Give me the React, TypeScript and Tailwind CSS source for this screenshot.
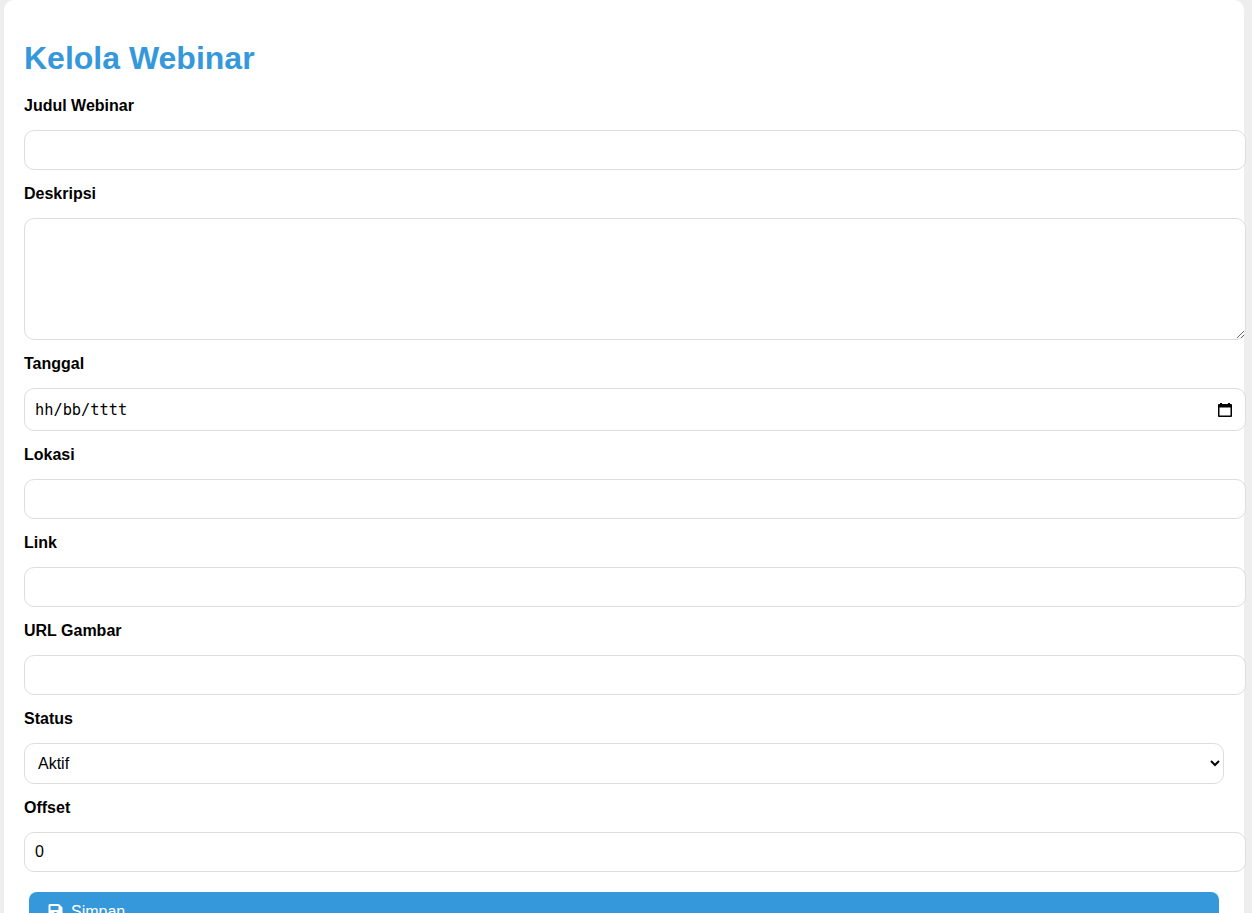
import { FaSave } from "react-icons/fa";

const labelClass = "block h-[18px] text-base leading-[18px] font-bold text-black";
const inputClass =
  "block h-10 w-[1222px] rounded-[10px] border border-[#dddddd] bg-white px-[10px] text-base text-black outline-none";

function Field({
  label,
  className,
  children,
}: {
  label: string;
  className?: string;
  children: React.ReactNode;
}) {
  return (
    <div className={className}>
      <label className={labelClass}>{label}</label>
      <div className="mt-[15px]">{children}</div>
    </div>
  );
}

export default function App() {
  return (
    <div className="h-screen overflow-hidden bg-[#eeeeee] pr-2 pl-1 font-['Liberation_Sans',Arial,sans-serif]">
      <div className="h-[1000px] rounded-[10px] bg-white px-5 pt-[37px]">
        <h1 className="h-[42px] text-[32px] leading-[42px] font-bold text-[#3498db]">Kelola Webinar</h1>
        <form className="mt-[18px] flex flex-col gap-[15px]" onSubmit={(e) => e.preventDefault()}>
          <Field label="Judul Webinar">
            <input type="text" className={inputClass} />
          </Field>
          <Field label="Deskripsi">
            <textarea className="block h-[122px] w-[1222px] rounded-[10px] border border-[#dddddd] bg-white px-[10px] py-2 text-base text-black outline-none" />
          </Field>
          <Field label="Tanggal">
            <div className="flex h-[43px] w-[1222px] items-center justify-between rounded-[10px] border border-[#dddddd] bg-white pr-[12px] pl-[10px]">
              <span className="pt-[2px] font-['DejaVu_Sans_Mono',monospace] text-[15.3px] text-black">hh/bb/tttt</span>
              <svg width="16" height="16" viewBox="0 0 16 16" aria-hidden="true">
                <path
                  fill="#000"
                  fillRule="evenodd"
                  d="M3 1h2v1h6V1h2v1h1a1 1 0 0 1 1 1v11a1 1 0 0 1-1 1H2a1 1 0 0 1-1-1V3a1 1 0 0 1 1-1h1V1zM2.5 5.5v8h11v-8h-11z"
                />
              </svg>
            </div>
          </Field>
          <Field label="Lokasi">
            <input type="text" className={inputClass} />
          </Field>
          <Field label="Link">
            <input type="text" className={inputClass} />
          </Field>
          <Field label="URL Gambar">
            <input type="text" className={inputClass} />
          </Field>
          <Field label="Status">
            <select
              defaultValue="aktif"
              className="block h-[41px] w-[1200px] rounded-[10px] border border-[#dddddd] bg-white pr-[10px] pl-[9px] text-base text-black outline-none"
            >
              <option value="aktif">Aktif</option>
              <option value="nonaktif">Nonaktif</option>
            </select>
          </Field>
          <Field label="Offset">
            <input type="text" defaultValue="0" className={inputClass} />
          </Field>
          <button
            type="submit"
            className="mt-[5px] ml-[5px] flex h-10 w-[1190px] items-start gap-2 rounded-[8px] bg-[#3498db] px-[19px] pt-[8px] text-base text-white"
          >
            <FaSave className="mt-[3px] h-4 w-[15px]" />
            Simpan
          </button>
        </form>
      </div>
    </div>
  );
}
